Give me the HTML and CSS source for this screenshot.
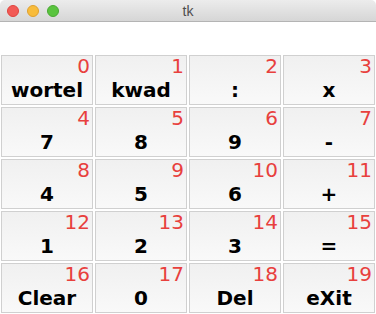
FILE: index.html
```html
<!DOCTYPE html>
<html lang="en">
<head>
  <meta charset="UTF-8" />
  <title>tk</title>
  <link rel="stylesheet" href="styles.css">
</head>
<body>
  <!-- Window title bar -->
  <div class="titlebar">
    <div class="lights">
      <span class="light red"></span>
      <span class="light yellow"></span>
      <span class="light green"></span>
    </div>
    <div class="title">tk</div>
  </div>

  <!-- Keypad -->
  <div class="keypad">
    <div class="key"><span class="num">0</span><span class="label">wortel</span></div>
    <div class="key"><span class="num">1</span><span class="label">kwad</span></div>
    <div class="key"><span class="num">2</span><span class="label">:</span></div>
    <div class="key"><span class="num">3</span><span class="label">x</span></div>
    <div class="key"><span class="num">4</span><span class="label">7</span></div>
    <div class="key"><span class="num">5</span><span class="label">8</span></div>
    <div class="key"><span class="num">6</span><span class="label">9</span></div>
    <div class="key"><span class="num">7</span><span class="label">-</span></div>
    <div class="key"><span class="num">8</span><span class="label">4</span></div>
    <div class="key"><span class="num">9</span><span class="label">5</span></div>
    <div class="key"><span class="num">10</span><span class="label">6</span></div>
    <div class="key"><span class="num">11</span><span class="label">+</span></div>
    <div class="key"><span class="num">12</span><span class="label">1</span></div>
    <div class="key"><span class="num">13</span><span class="label">2</span></div>
    <div class="key"><span class="num">14</span><span class="label">3</span></div>
    <div class="key"><span class="num">15</span><span class="label">=</span></div>
    <div class="key"><span class="num">16</span><span class="label">Clear</span></div>
    <div class="key"><span class="num">17</span><span class="label">0</span></div>
    <div class="key"><span class="num">18</span><span class="label">Del</span></div>
    <div class="key"><span class="num">19</span><span class="label">eXit</span></div>
  </div>
</body>
</html>
```

FILE: styles.css
```css
body {
  margin: 0;
  background-color: #ffffff;
  font-family: "DejaVu Sans", Verdana, sans-serif;
}
/* Mac style title bar */
.titlebar {
  position: relative;
  height: 21px;
  border-bottom: 1px solid #b4b4b4;
  background: linear-gradient(#ececec, #d6d6d6);
  border-radius: 5px 5px 0 0;
}
.lights {
  display: flex;
  gap: 8px;
  padding: 5px 0 0 7px;
}
.light {
  width: 12px;
  height: 12px;
  border-radius: 50%;
  box-sizing: border-box;
}
.red { background-color: #f25a55; border: 1px solid #e0443e; }
.yellow { background-color: #f8bc3b; border: 1px solid #e0a12e; }
.green { background-color: #5ac43f; border: 1px solid #4aa933; }
.title {
  position: absolute;
  top: 3px;
  left: 0;
  right: 0;
  text-align: center;
  font-family: "Liberation Sans", Arial, sans-serif;
  font-size: 14px;
  color: #4e4e4e;
}
/* Buttons grid: 4 per row */
.keypad {
  display: grid;
  grid-template-columns: repeat(4, 92px);
  grid-auto-rows: 50px;
  gap: 2px;
  padding: 33px 0 0 1px;
}
.key {
  display: flex;
  flex-direction: column;
  justify-content: space-between;
  box-sizing: border-box;
  border: 1px solid #d0d0d0;
  background: linear-gradient(#f0f0f0, #f9f9f9);
  padding: 0 2px 4px 2px;
}
.num {
  align-self: flex-end;
  font-size: 20px;
  line-height: 20px;
  color: #e8403d;
}
.label {
  text-align: center;
  font-size: 20px;
  line-height: 20px;
  font-weight: bold;
  color: #000000;
}
```
